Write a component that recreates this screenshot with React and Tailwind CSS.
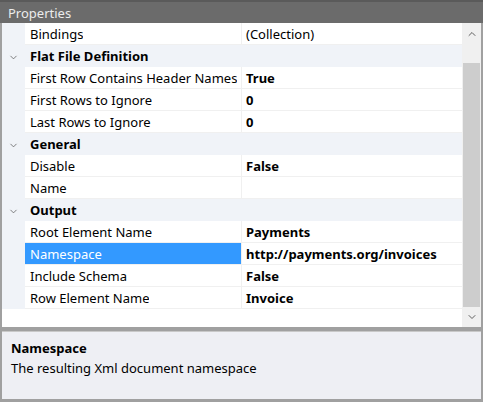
import { ChevronDown, ChevronUp } from "lucide-react";

const sections = [
  { rows: [{ name: "Bindings", value: "(Collection)", plain: true }] },
  {
    title: "Flat File Definition",
    rows: [
      { name: "First Row Contains Header Names", value: "True" },
      { name: "First Rows to Ignore", value: "0" },
      { name: "Last Rows to Ignore", value: "0" },
    ],
  },
  {
    title: "General",
    rows: [
      { name: "Disable", value: "False" },
      { name: "Name", value: "" },
    ],
  },
  {
    title: "Output",
    rows: [
      { name: "Root Element Name", value: "Payments" },
      { name: "Namespace", value: "http://payments.org/invoices", selected: true },
      { name: "Include Schema", value: "False" },
      { name: "Row Element Name", value: "Invoice" },
    ],
  },
];

function PropRow({ row }) {
  return (
    <div className="flex h-[22px] bg-[#f0f3f8]">
      <div className="w-[23px] shrink-0" />
      <div
        className={
          "flex w-[216px] shrink-0 items-center border-b border-[#f0f0f0] pt-[2px] pl-[5px] " +
          (row.selected ? "bg-[#3399ff] text-white" : "bg-white text-black")
        }
      >
        <span className="truncate">{row.name}</span>
      </div>
      <div
        className={
          "flex flex-1 items-center border-b border-l border-[#f0f0f0] bg-white pt-[2px] pl-[4px] text-black " +
          (row.plain ? "" : "font-bold")
        }
      >
        {row.value}
      </div>
    </div>
  );
}

function Category({ title }) {
  return (
    <div className="flex h-[22px] items-center bg-[#f0f3f8] pt-[2px]">
      <div className="flex w-[23px] shrink-0 justify-center">
        <ChevronDown size={11} strokeWidth={1.6} className="text-[#555]" />
      </div>
      <div className="pl-[5px] font-bold text-black">{title}</div>
    </div>
  );
}

export default function App() {
  return (
    <div
      className="flex h-[402px] w-[483px] flex-col bg-[#a0a0a0] text-[13px]"
      style={{ fontFamily: '"Noto Sans", "Open Sans", sans-serif' }}
    >
      {/* title bar */}
      <div className="flex h-[23px] shrink-0 items-center border-t-2 border-[#5a5a5a] bg-[#6b6b6b] px-[8px] pt-[2px] text-[13px] text-[#ececec]">
        Properties
      </div>

      <div className="mx-[2px] flex flex-1 flex-col">
        {/* grid + scrollbar */}
        <div className="flex h-[304px] shrink-0 bg-white">
          <div className="flex flex-1 flex-col">
            {sections.map((s, i) => (
              <div key={i}>
                {s.title ? <Category title={s.title} /> : null}
                {s.rows.map((r) => (
                  <PropRow key={r.name} row={r} />
                ))}
              </div>
            ))}
          </div>
          <div className="flex w-[19px] shrink-0 flex-col bg-[#f0f0f0]">
            <div className="flex h-[20px] items-center justify-center pt-[2px]">
              <ChevronUp size={12} strokeWidth={2} className="text-[#606060]" />
            </div>
            <div className="mx-[1px] mt-[20px] flex-1 bg-[#cdcdcd]" />
            <div className="flex h-[20px] items-center justify-center">
              <ChevronDown size={12} strokeWidth={2} className="text-[#606060]" />
            </div>
          </div>
        </div>

        {/* description */}
        <div className="mt-[4px] mb-[3px] flex flex-1 flex-col border-t border-[#c8c8c8] bg-[#eeeff4] px-[9px] pt-[6px] text-black">
          <div className="font-bold leading-[20px]">Namespace</div>
          <div className="leading-[20px]">The resulting Xml document namespace</div>
        </div>
      </div>
    </div>
  );
}
